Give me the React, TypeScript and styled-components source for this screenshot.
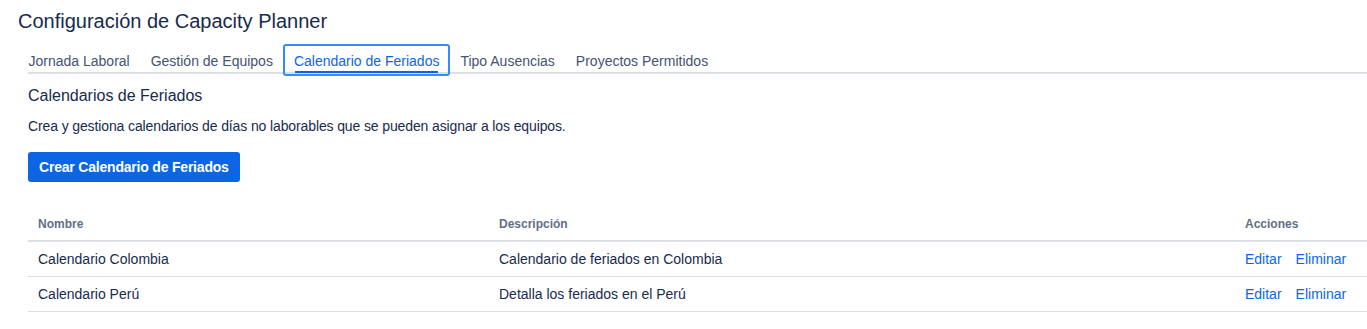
import React from 'react';
import styled, { createGlobalStyle } from 'styled-components';

const GlobalStyle = createGlobalStyle`
  body {
    margin: 0;
    background: #ffffff;
    font-family: "Liberation Sans", Arial, sans-serif;
    color: #172b4d;
  }
`

const Page = styled.div`
  padding: 9px 0 0 18px;
`

const Title = styled.h1`
  margin: 0;
  font-size: 20px;
  line-height: 24px;
  font-weight: 400;
  color: #172b4d;
`

const TabList = styled.div`
  position: relative;
  display: flex;
  margin-top: 11px;
  height: 32px;

  &::before {
    content: '';
    position: absolute;
    left: 10px;
    right: 0;
    bottom: 2px;
    height: 2px;
    background: #dcdfe4;
  }
`

const Tab = styled.div<{ $active?: boolean }>`
  position: relative;
  display: flex;
  align-items: center;
  padding: 2px 10.5px 0;
  font-size: 14px;
  color: ${p => (p.$active ? '#0c66e4' : '#44546f')};
  border-radius: 3px;
  box-shadow: ${p => (p.$active ? 'inset 0 0 0 2px #388bff' : 'none')};
  white-space: nowrap;

  &::after {
    content: '';
    display: ${p => (p.$active ? 'block' : 'none')};
    position: absolute;
    left: 12px;
    right: 12px;
    bottom: 3px;
    height: 2px;
    background: #0c66e4;
  }
`

const Content = styled.div`
  padding: 10px 0 0 10px;
`

const SectionTitle = styled.h2`
  margin: 0;
  font-size: 16px;
  line-height: 20px;
  font-weight: 500;
  color: #172b4d;
`

const Description = styled.p`
  margin: 10px 0 0;
  font-size: 14px;
  line-height: 20px;
  letter-spacing: -0.12px;
  color: #172b4d;
`

const PrimaryButton = styled.button`
  margin-top: 16px;
  height: 30px;
  padding: 0 11px;
  border: none;
  border-radius: 3px;
  background: #0c66e4;
  color: #ffffff;
  font-family: inherit;
  font-size: 14px;
  font-weight: 700;
  letter-spacing: -0.2px;
  cursor: pointer;
`

const Table = styled.table`
  margin-top: 30px;
  width: 100%;
  border-collapse: collapse;
  table-layout: fixed;
`

const HeadCell = styled.th<{ $width?: number }>`
  box-sizing: border-box;
  width: ${p => (p.$width ? `${p.$width}px` : 'auto')};
  padding: 0 10px 5px;
  height: 29px;
  text-align: left;
  font-size: 12px;
  line-height: 14px;
  font-weight: 700;
  color: #626f86;
  border-bottom: 2px solid #dcdfe4;
`

const Row = styled.tr`
  border-bottom: 1px solid #dcdfe4;
`

const Cell = styled.td`
  height: 34px;
  padding: 0 10px;
  font-size: 14px;
  color: #172b4d;
`

const Actions = styled.div`
  display: flex;
  gap: 14px;
`

const LinkButton = styled.a`
  color: #0c66e4;
  font-size: 14px;
  text-decoration: none;
  cursor: pointer;
`

const tabs = ['Jornada Laboral', 'Gestión de Equipos', 'Calendario de Feriados', 'Tipo Ausencias', 'Proyectos Permitidos'];

const calendars = [
  { name: 'Calendario Colombia', description: 'Calendario de feriados en Colombia' },
  { name: 'Calendario Perú', description: 'Detalla los feriados en el Perú' },
];

const App: React.FC = () => {
  return (
    <>
      <GlobalStyle />
      <Page>
        <Title>Configuración de Capacity Planner</Title>
        <TabList>
          {tabs.map(t => (
            <Tab key={t} $active={t === 'Calendario de Feriados'}>{t}</Tab>
          ))}
        </TabList>
        <Content>
          <SectionTitle>Calendarios de Feriados</SectionTitle>
          <Description>Crea y gestiona calendarios de días no laborables que se pueden asignar a los equipos.</Description>
          <PrimaryButton>Crear Calendario de Feriados</PrimaryButton>
          <Table>
            <thead>
              <tr>
                <HeadCell $width={461}>Nombre</HeadCell>
                <HeadCell $width={746}>Descripción</HeadCell>
                <HeadCell>Acciones</HeadCell>
              </tr>
            </thead>
            <tbody>
              {calendars.map(c => (
                <Row key={c.name}>
                  <Cell>{c.name}</Cell>
                  <Cell>{c.description}</Cell>
                  <Cell>
                    <Actions>
                      <LinkButton>Editar</LinkButton>
                      <LinkButton>Eliminar</LinkButton>
                    </Actions>
                  </Cell>
                </Row>
              ))}
            </tbody>
          </Table>
        </Content>
      </Page>
    </>
  );
}

export default App;
